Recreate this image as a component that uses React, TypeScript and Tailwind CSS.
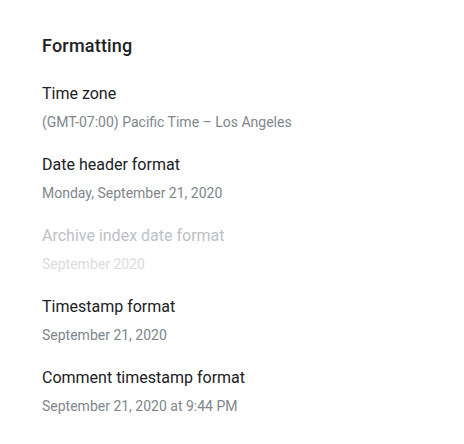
const items = [
  { label: "Time zone", value: "(GMT-07:00) Pacific Time – Los Angeles" },
  { label: "Date header format", value: "Monday, September 21, 2020" },
  { label: "Archive index date format", value: "September 2020", disabled: true },
  { label: "Timestamp format", value: "September 21, 2020" },
  { label: "Comment timestamp format", value: "September 21, 2020 at 9:44 PM" },
];

export default function App() {
  return (
    <div
      className="w-[464px] h-[444px] bg-white pl-[42px] pt-[34px]"
      style={{ fontFamily: "Roboto, 'Liberation Sans', sans-serif" }}
    >
      <h2 className="text-[18px] leading-6 font-medium text-[#202124] tracking-[0.2px]">Formatting</h2>
      <div className="mt-6 flex flex-col gap-[21px]">
        {items.map((item) => (
          <div key={item.label} className="flex flex-col gap-[6px]">
            <div className={`text-[16px] leading-6 ${item.disabled ? "text-[#bdc1c6]" : "text-[#202124]"}`}>
              {item.label}
            </div>
            <div className={`text-[14px] leading-5 ${item.disabled ? "text-[#dadce0]" : "text-[#80868b]"}`}>
              {item.value}
            </div>
          </div>
        ))}
      </div>
    </div>
  );
}
